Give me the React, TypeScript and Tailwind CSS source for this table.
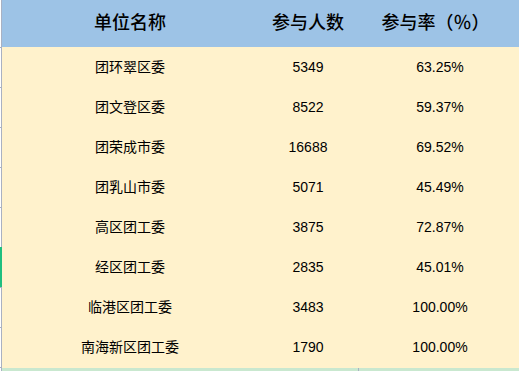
const rows = [
  { name: "团环翠区委", count: "5349", rate: "63.25%" },
  { name: "团文登区委", count: "8522", rate: "59.37%" },
  { name: "团荣成市委", count: "16688", rate: "69.52%" },
  { name: "团乳山市委", count: "5071", rate: "45.49%" },
  { name: "高区团工委", count: "3875", rate: "72.87%" },
  { name: "经区团工委", count: "2835", rate: "45.01%" },
  { name: "临港区团工委", count: "3483", rate: "100.00%" },
  { name: "南海新区团工委", count: "1790", rate: "100.00%" },
]

const cjk = "font-['Liberation_Sans','Noto_Sans_CJK_SC',sans-serif]"

function Gutter({ tick, green }: { tick?: boolean; green?: boolean }) {
  return (
    <div className="relative w-[2px] self-stretch bg-white">
      <div className="absolute right-0 top-0 h-full w-[1px] bg-[#a9b1c2]" />
      {tick && <div className="absolute left-0 top-0 h-[1px] w-[1px] bg-[#a9b1c2]" />}
      {green && <div className="absolute left-0 top-0 h-full w-[2px] bg-[#1fbf7f]" />}
    </div>
  )
}

export default function App() {
  return (
    <div className={`w-[519px] h-[371px] overflow-hidden bg-white text-black ${cjk}`}>
      <div className="flex h-[47px]">
        <Gutter />
        <div className="grid flex-1 grid-cols-[256px_100px_1fr] items-center bg-[#9dc3e6] text-[18px] font-medium">
          <div className="text-center">单位名称</div>
          <div className="text-center">参与人数</div>
          <div className="pr-[6px] text-center">参与率（％）</div>
        </div>
      </div>
      {rows.map((r, i) => (
        <div key={r.name} className="flex h-[40px]">
          <Gutter tick green={i === 5} />
          <div className="grid flex-1 grid-cols-[256px_100px_1fr] items-center bg-[#fff2cc] text-[14px]">
            <div className="text-center">{r.name}</div>
            <div className="text-center">{r.count}</div>
            <div className="pl-[3px] text-center">{r.rate}</div>
          </div>
        </div>
      ))}
      <div className="flex h-[1px]">
        <Gutter tick />
        <div className="flex-1 bg-[#fff2cc]" />
      </div>
      <div className="flex h-[4px]">
        <Gutter />
        <div className="grid flex-1 grid-cols-[356px_1fr] bg-[#c9e8cf]">
          <div />
          <div className="w-[1px] bg-[#a9b1c2]" />
        </div>
      </div>
    </div>
  )
}
